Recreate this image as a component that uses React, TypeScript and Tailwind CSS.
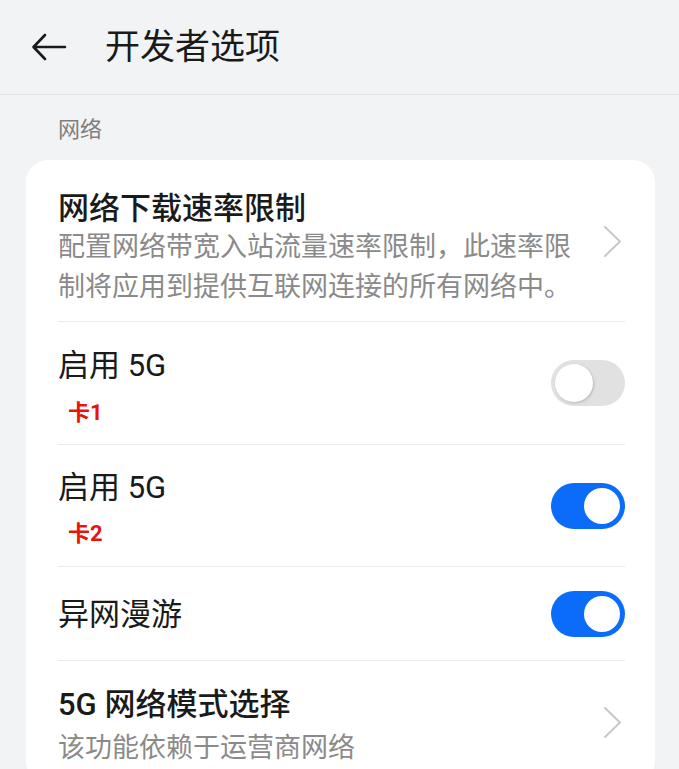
import React from "react"

const font = { fontFamily: 'Roboto, "Noto Sans CJK SC", sans-serif' }

function Chevron() {
  return (
    <svg width="26" height="32" viewBox="0 0 26 32" fill="none" className="shrink-0">
      <polyline points="6,2 21,16.5 6,31" stroke="#c8c8c8" strokeWidth="2" strokeLinecap="round" strokeLinejoin="round" />
    </svg>
  )
}

function Toggle({ on }: { on: boolean }) {
  if (on) {
    return (
      <div className="w-[74px] h-[46px] rounded-full bg-[#0a6cf9] flex items-center justify-end pr-[5px] shrink-0">
        <div className="w-[36px] h-[36px] rounded-full bg-white" />
      </div>
    )
  }
  return (
    <div className="w-[74px] h-[46px] rounded-full bg-[#e1e1e1] flex items-center pl-[4px] shrink-0">
      <div className="w-[38px] h-[38px] rounded-full bg-white shadow-[1px_1px_3px_rgba(0,0,0,0.18)]" />
    </div>
  )
}

function Divider() {
  return <div className="h-px bg-[#ebebeb]" />
}

export default function App() {
  return (
    <div className="min-h-screen h-[769px] overflow-hidden bg-[#f2f3f5] text-[#1a1a1a]" style={font}>
      <header className="h-[95px] flex items-center pl-[31px] border-b border-[#e2e3e5]">
        <svg width="36" height="28" viewBox="0 0 36 28" fill="none">
          <path d="M34 14H3M14 2L2.5 14L14 26" stroke="#1a1a1a" strokeWidth="2.6" strokeLinecap="round" strokeLinejoin="round" />
        </svg>
        <h1 className="ml-[38px] text-[35px] leading-none">开发者选项</h1>
      </header>

      <div className="pl-[58px] pt-[21px] pb-[16px] text-[22px] leading-[28px] text-[#7f7f7f]">网络</div>

      <div className="ml-[26px] mr-[24px] bg-white rounded-[22px] pl-[32px] pr-[30px]">
        <div className="flex items-center">
          <div className="flex-1 pt-[31px] pb-[14px]">
            <div className="text-[31px] leading-[36px] font-medium">网络下载速率限制</div>
            <div className="text-[27px] leading-[40px] text-[#8a8a8a] pr-[18px]">配置网络带宽入站流量速率限制，此速率限制将应用到提供互联网连接的所有网络中。</div>
          </div>
          <Chevron />
        </div>
        <Divider />

        <div className="flex items-center">
          <div className="flex-1 pt-[26px] pb-[17px]">
            <div className="text-[31px] leading-[36px]">启用 5G</div>
            <div className="mt-[15px] pl-[10px] text-[22px] leading-[28px] font-bold text-[#e8140c]">卡1</div>
          </div>
          <Toggle on={false} />
        </div>
        <Divider />

        <div className="flex items-center">
          <div className="flex-1 pt-[25px] pb-[18px]">
            <div className="text-[31px] leading-[36px]">启用 5G</div>
            <div className="mt-[14px] pl-[10px] text-[22px] leading-[28px] font-bold text-[#e8140c]">卡2</div>
          </div>
          <Toggle on={true} />
        </div>
        <Divider />

        <div className="flex items-center h-[93px]">
          <div className="flex-1 pt-[2px] text-[31px] leading-[36px]">异网漫游</div>
          <Toggle on={true} />
        </div>
        <Divider />

        <div className="flex items-center">
          <div className="flex-1 pt-[26px] pb-[15px]">
            <div className="text-[31px] leading-[36px] font-medium">5G 网络模式选择</div>
            <div className="mt-[5px] text-[27px] leading-[40px] text-[#8a8a8a]">该功能依赖于运营商网络</div>
          </div>
          <Chevron />
        </div>
      </div>
    </div>
  )
}
